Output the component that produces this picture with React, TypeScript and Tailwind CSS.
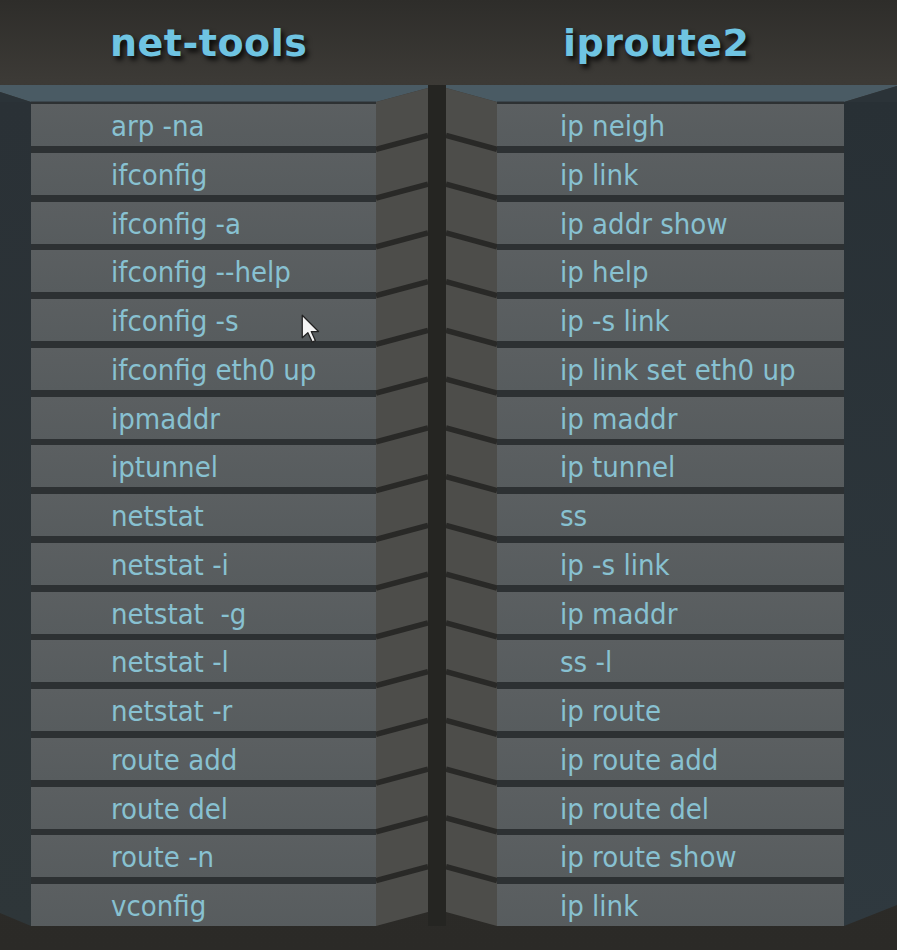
import React from "react";

const LEFT = [
  "arp -na",
  "ifconfig",
  "ifconfig -a",
  "ifconfig --help",
  "ifconfig -s",
  "ifconfig eth0 up",
  "ipmaddr",
  "iptunnel",
  "netstat",
  "netstat -i",
  "netstat  -g",
  "netstat -l",
  "netstat -r",
  "route add",
  "route del",
  "route -n",
  "vconfig",
];

const RIGHT = [
  "ip neigh",
  "ip link",
  "ip addr show",
  "ip help",
  "ip -s link",
  "ip link set eth0 up",
  "ip maddr",
  "ip tunnel",
  "ss",
  "ip -s link",
  "ip maddr",
  "ss -l",
  "ip route",
  "ip route add",
  "ip route del",
  "ip route show",
  "ip link",
];

const PITCH = 48.75;
const GAPS = Array.from({ length: 16 }, (_, i) => 47.375 + i * PITCH);

const SIDE = "#2b3338";
const TOP = "#4a5b64";
const BEVEL = "#4d4d4a";
const LINE = "#292927";

function Rows({ items, pad }: { items: string[]; pad: string }) {
  return (
    <div className="flex flex-col gap-[6.75px] bg-[#2d3133] pt-[2px] h-[824px]">
      {items.map((t, i) => (
        <div
          key={i}
          className={`h-[42px] flex items-center pt-[3px] bg-[linear-gradient(180deg,#5b5f61,#575c5e)] ${pad} text-[#88c1d1] text-[29px] leading-none whitespace-pre`}
          style={{ fontFamily: '"DejaVu Sans Condensed", "DejaVu Sans", sans-serif', fontStretch: "condensed" }}
        >
          {t}
        </div>
      ))}
    </div>
  );
}

function Cursor() {
  return (
    <svg width="20" height="30" viewBox="0 0 16 24" className="absolute left-[301px] top-[314px]">
      <path d="M1 1 L1 19 L5.5 15 L9 22.5 L11.5 21.3 L8.2 14 L14 14 Z" fill="#f4f4f4" stroke="#222" strokeWidth="1" strokeLinejoin="round" />
    </svg>
  );
}

export default function App() {
  const titleStyle: React.CSSProperties = {
    fontFamily: '"DejaVu Sans", "Liberation Sans", sans-serif',
    textShadow: "3px 4px 5px rgba(0,0,0,0.8)",
  };
  return (
    <div className="relative w-[897px] h-[950px] overflow-hidden flex flex-col bg-[linear-gradient(180deg,#2e2d2a_0px,#3c3a36_80px,#2f2e2b_400px,#2b2a27_950px)]">
      {/* header */}
      <div className="h-[85px] flex items-center">
        <div className="w-[446px] pl-[110px] pt-[1px]">
          <span className="text-[38px] font-bold text-[#6fc4e2] tracking-[0.5px]" style={titleStyle}>
            net-tools
          </span>
        </div>
        <div className="pl-[117px] pt-[1px]">
          <span className="text-[38px] font-bold text-[#6fc4e2] tracking-[0.5px]" style={titleStyle}>
            iproute2
          </span>
        </div>
      </div>

      {/* panels */}
      <div className="flex">
        {/* left panel */}
        <div className="w-[428px] flex flex-col">
          <svg width="428" height="17" className="block">
            <polygon points="0,0 428,0 428,3 376,17 31,17 0,7" fill={TOP} />
            <polygon points="0,7 31,17 0,17" fill={SIDE} />
            <polygon points="376,17 428,3 428,17" fill={BEVEL} />
            <line x1="31" y1="16.5" x2="376" y2="16.5" stroke="#3c474e" strokeWidth="1" />
          </svg>
          <div className="flex">
            <svg width="31" height="824" className="block">
              <defs>
                <linearGradient id="ls" x1="0" y1="0" x2="0" y2="1">
                  <stop offset="0" stopColor="#2a3136" />
                  <stop offset="1" stopColor="#2e3639" />
                </linearGradient>
              </defs>
              <polygon points="0,0 31,0 31,824 0,811" fill="url(#ls)" />
            </svg>
            <div className="w-[345px]">
              <Rows items={LEFT} pad="pl-[80px]" />
            </div>
            <svg width="52" height="824" className="block">
              <polygon points="0,0 52,0 52,810 0,824" fill={BEVEL} />
              {GAPS.map((y, i) => (
                <line key={i} x1="0" y1={y} x2="52" y2={y - 14} stroke={LINE} strokeWidth="5.5" />
              ))}
            </svg>
          </div>
        </div>

        {/* divider */}
        <div className="w-[18px] bg-[#252522]" />

        {/* right panel */}
        <div className="w-[451px] flex flex-col">
          <svg width="451" height="17" className="block">
            <polygon points="0,0 451,0 451,1 398,17 51,17 0,3" fill={TOP} />
            <polygon points="0,3 51,17 0,17" fill={BEVEL} />
            <polygon points="398,17 451,1 451,17" fill={SIDE} />
            <line x1="51" y1="16.5" x2="398" y2="16.5" stroke="#3c474e" strokeWidth="1" />
          </svg>
          <div className="flex">
            <svg width="51" height="824" className="block">
              <polygon points="0,0 51,0 51,824 0,810" fill={BEVEL} />
              {GAPS.map((y, i) => (
                <line key={i} x1="0" y1={y - 14} x2="51" y2={y} stroke={LINE} strokeWidth="5.5" />
              ))}
            </svg>
            <div className="w-[347px]">
              <Rows items={RIGHT} pad="pl-[63px]" />
            </div>
            <svg width="53" height="824" className="block">
              <defs>
                <linearGradient id="rs" x1="0" y1="0" x2="0" y2="1">
                  <stop offset="0" stopColor="#283035" />
                  <stop offset="1" stopColor="#2f393f" />
                </linearGradient>
              </defs>
              <polygon points="0,0 53,0 53,803 0,824" fill="url(#rs)" />
            </svg>
          </div>
        </div>
      </div>

      <Cursor />
    </div>
  );
}
